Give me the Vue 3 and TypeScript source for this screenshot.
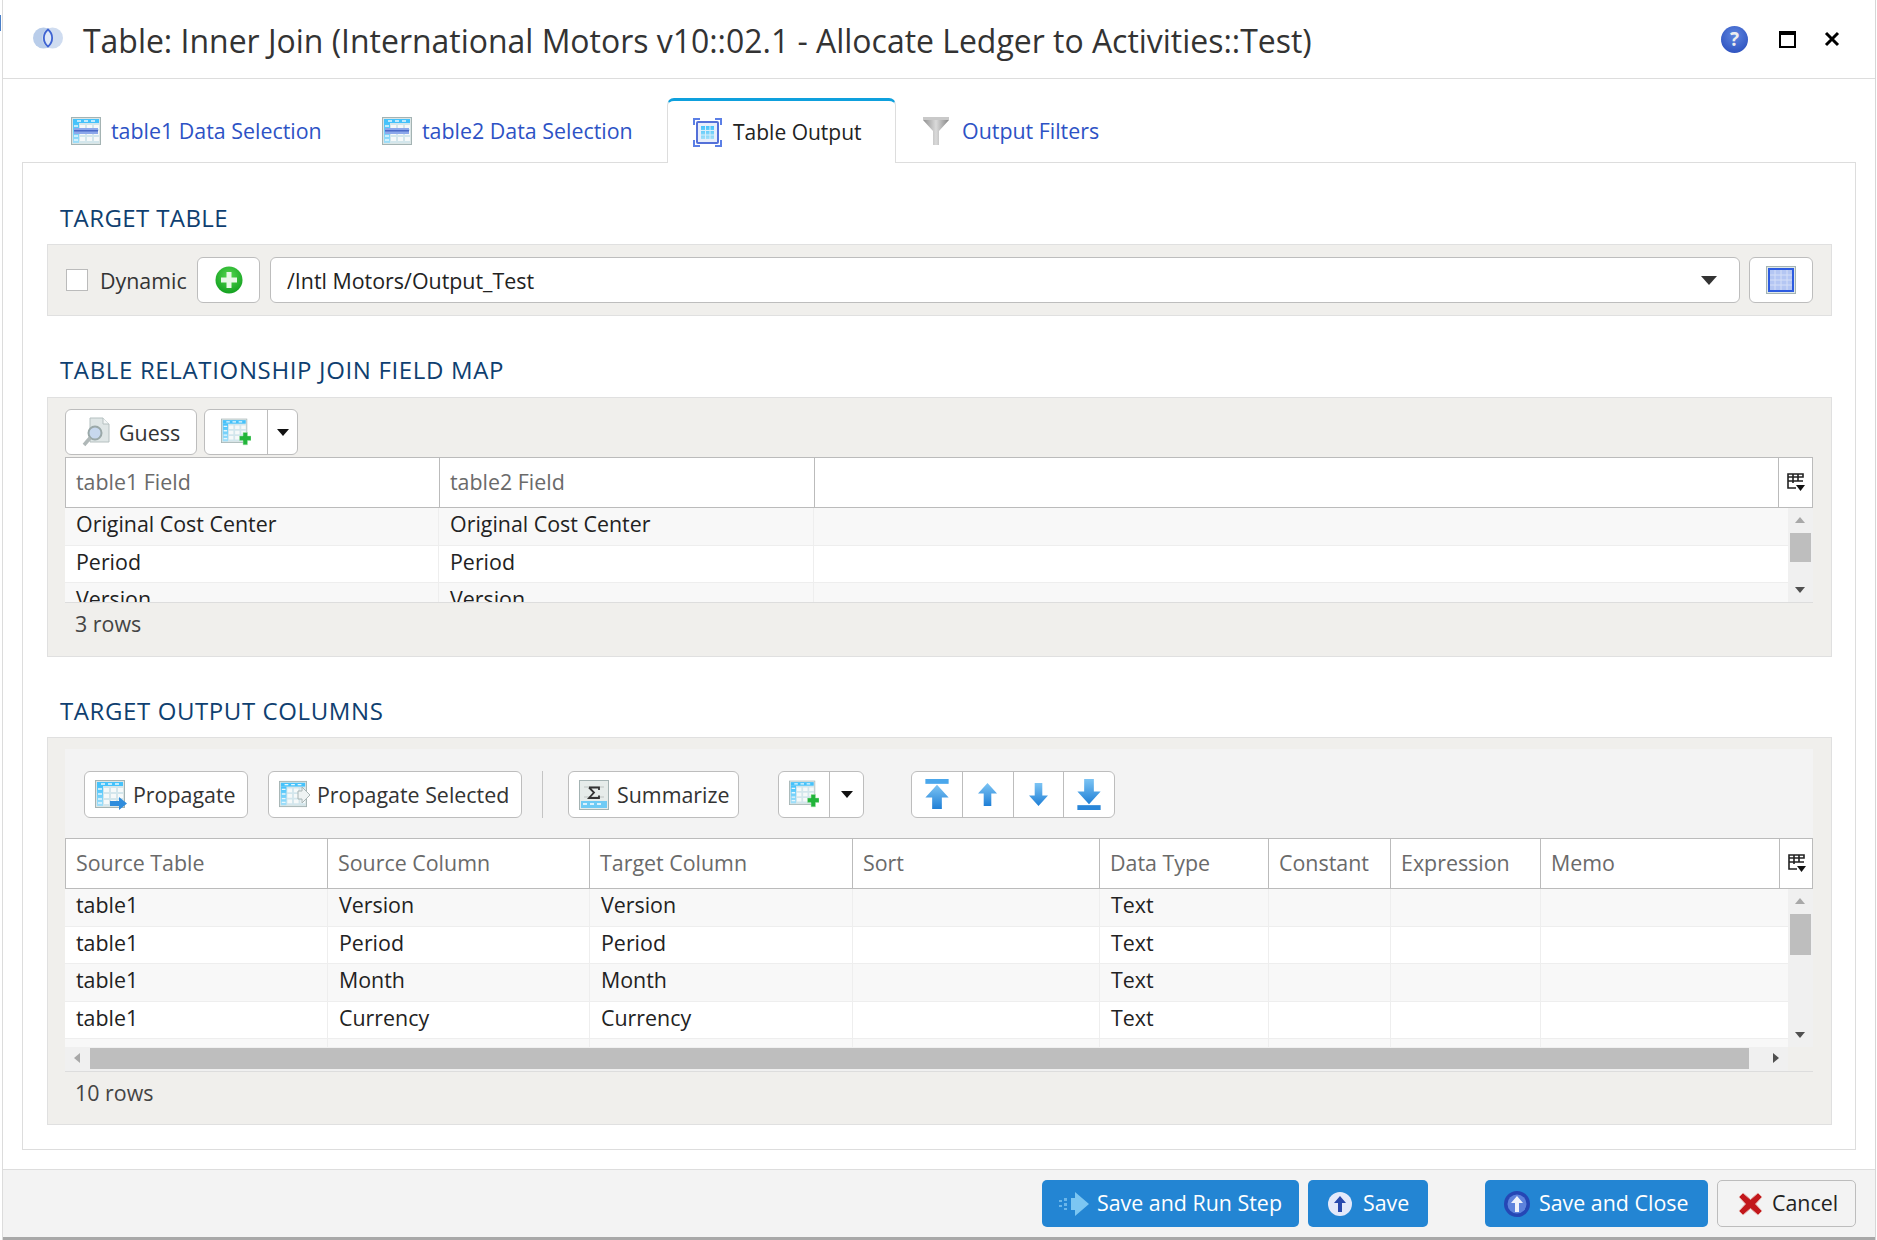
<template>
  <div class="page">
    <span class="edge-mark"></span>
    <div class="dialog">
      <svg class="sprite" width="0" height="0">
        <defs>
          <linearGradient id="cyan" x1="0" y1="0" x2="0" y2="1">
            <stop offset="0" stop-color="#45c2fb" />
            <stop offset="1" stop-color="#a2dff9" />
          </linearGradient>
          <linearGradient id="arrow" x1="0" y1="0" x2="0" y2="1">
            <stop offset="0" stop-color="#7cc4f4" />
            <stop offset="1" stop-color="#1f7fd6" />
          </linearGradient>
          <radialGradient id="green" cx="0.5" cy="0.35" r="0.7">
            <stop offset="0" stop-color="#55d850" />
            <stop offset="1" stop-color="#0e9c1c" />
          </radialGradient>
          <linearGradient id="steel" x1="0" y1="0" x2="1" y2="0">
            <stop offset="0" stop-color="#8f8f8f" />
            <stop offset="0.5" stop-color="#dadada" />
            <stop offset="1" stop-color="#858585" />
          </linearGradient>
          <symbol id="grid" viewBox="0 0 30 28">
            <rect x="0.5" y="0.5" width="29" height="27" fill="#dbe5e5" stroke="#a4b3b3" />
            <rect x="2" y="2" width="26" height="24" fill="#d3e6ec" />
            <rect x="2" y="2" width="26" height="4" fill="#45c2fb" />
            <rect x="2" y="6" width="6" height="20" fill="url(#cyan)" />
            <path d="M9 8h5v4H9zM16 8h5v4h-5zM23 8h5v4h-5zM9 14h5v4H9zM16 14h5v4h-5zM23 14h5v4h-5zM9 20h5v4H9zM16 20h5v4h-5zM23 20h5v4h-5z" fill="#f6f9f9" />
            <path d="M3 9h4M3 14h4M3 19h4M3 23h4M6 4h4M13 4h4M20 4h4" stroke="#e6f7fe" stroke-width="1.5" />
          </symbol>
          <symbol id="grid-band" viewBox="0 0 30 28">
            <use href="#grid" width="30" height="28" />
            <rect x="3" y="11" width="24" height="6" fill="#8da8ea" />
            <rect x="3" y="13" width="24" height="1.5" fill="#4a69c8" />
          </symbol>
          <symbol id="grid-plus" viewBox="0 0 34 32">
            <use href="#grid" width="30" height="28" />
            <path d="M21 20h4v-4h5v4h4v5h-4v5h-5v-5h-4z" fill="#22b53a" stroke="#a7e6ae" stroke-width="0.5" />
          </symbol>
          <symbol id="grid-arrow" viewBox="0 0 32 30">
            <use href="#grid" width="30" height="28" />
            <path d="M15 21h9v-4l8 6.500-8 6.500v-4h-9z" fill="#2f8cdc" />
          </symbol>
          <symbol id="grid-arrow-pale" viewBox="0 0 32 30">
            <use href="#grid" width="28" height="28" />
            <path d="M19 11h4V7l8 8-8 8v-4h-4z" fill="#eef3f3" stroke="#a9b5b5" />
          </symbol>
          <symbol id="sum" viewBox="0 0 30 30">
            <rect x="0.500" y="0.500" width="29" height="29" fill="#e6ecea" stroke="#a4b3b3" />
            <rect x="2" y="21" width="26" height="7" fill="#6fcbf5" />
            <path d="M4 24h4M11 24h4M18 24h4" stroke="#fff" stroke-width="1.500" />
            <path d="M5 7h20M5 17h20" stroke="#d2d8d6" stroke-width="2" />
            <path d="M10 7.500h10v2.500M10 7.500l5 5-5 5.500h10v-2.500" fill="none" stroke="#333" stroke-width="1.800" />
          </symbol>
          <symbol id="top" viewBox="0 0 26 32">
            <rect x="1" y="0" width="24" height="5" fill="#4aa7ec" />
            <path d="M13 6 25 19h-7v12H8V19H1z" fill="url(#arrow)" />
          </symbol>
          <symbol id="up" viewBox="0 0 20 24">
            <path d="M10 0 20 11h-6v13H6V11H0z" fill="url(#arrow)" />
          </symbol>
          <symbol id="down" viewBox="0 0 20 24">
            <path d="M10 24 0 13h6V0h8v13h6z" fill="url(#arrow)" />
          </symbol>
          <symbol id="bottom" viewBox="0 0 26 32">
            <path d="M13 26 1 13h7V0h10v13h7z" fill="url(#arrow)" />
            <rect x="1" y="27" width="24" height="5" fill="#2a86d8" />
          </symbol>
          <symbol id="columns" viewBox="0 0 18 20">
            <path d="M1 2h15v3H1zM1 5v11h8M6 2v9M11 2v7M1 9h15" fill="none" stroke="#222" stroke-width="1.600" />
            <path d="M9 13h9l-4.500 6z" fill="#111" />
          </symbol>
        </defs>
      </svg>

      <header class="title-bar">
        <svg class="venn" width="30" height="22" viewBox="0 0 30 22">
          <circle cx="10.500" cy="11" r="10.500" fill="#b9cdea" />
          <circle cx="19.500" cy="11" r="10.500" fill="#cfdcf0" />
          <path d="M15 2.500c-5.500 4.500-5.500 12.500 0 17 5.500-4.500 5.500-12.500 0-17z" fill="#dfe8f7" stroke="#3e63d2" stroke-width="1.800" />
        </svg>
        <h1 class="title">Table: Inner Join (International Motors v10::02.1 - Allocate Ledger to Activities::Test)</h1>
        <span class="help">?</span>
        <span class="maximize"></span>
        <svg class="close" width="16" height="16" viewBox="0 0 16 16">
          <path d="M2 2l12 12M14 2 2 14" stroke="#000" stroke-width="3" />
        </svg>
      </header>

      <nav class="tabs">
        <a class="tab tab-one"><svg class="tab-icon" width="30" height="28"><use href="#grid-band" /></svg>table1 Data Selection</a>
        <a class="tab tab-two"><svg class="tab-icon" width="30" height="28"><use href="#grid-band" /></svg>table2 Data Selection</a>
        <a class="tab tab-active">
          <svg class="tab-icon" width="29" height="29" viewBox="0 0 29 29">
            <path d="M1 7V1h6M22 1h6v6M28 22v6h-6M7 28H1v-6" fill="none" stroke="#5b7fe6" stroke-width="2" />
            <rect x="4" y="4" width="21" height="21" rx="1" fill="#e8eefb" stroke="#5470d8" stroke-width="2" />
            <rect x="8" y="8" width="13" height="13" fill="url(#cyan)" />
            <path d="M12.500 8v13M17 8v13M8 12.500h13M8 17h13" stroke="#d9eefa" />
          </svg>
          Table Output
        </a>
        <a class="tab tab-filters">
          <svg class="tab-icon" width="26" height="29" viewBox="0 0 26 29">
            <path d="M0 1h26v3L16 15v14h-6V15L0 4z" fill="url(#steel)" />
            <path d="M0 1h26v3H0z" fill="#c9c9c9" />
          </svg>
          Output Filters
        </a>
      </nav>

      <main class="content">
        <h2 class="section-label">TARGET TABLE</h2>
        <section class="panel target-panel">
          <span class="checkbox"></span>
          <span class="dynamic">Dynamic</span>
          <button class="btn add-btn">
            <svg width="28" height="28" viewBox="0 0 28 28">
              <circle cx="14" cy="14" r="13.500" fill="url(#green)" />
              <path d="M11.500 6h5v5.500H22v5h-5.500V22h-5v-5.500H6v-5h5.500z" fill="#e9f8e8" />
            </svg>
          </button>
          <div class="combo">
            <span>/Intl Motors/Output_Test</span>
            <i class="caret-lg"></i>
          </div>
          <button class="btn table-btn">
            <svg width="30" height="28" viewBox="0 0 30 28">
              <rect x="0.500" y="0.500" width="29" height="27" fill="#dfe8e8" stroke="#a4b3b3" />
              <rect x="3" y="3" width="24" height="22" fill="#b4c6f3" stroke="#2d5be0" stroke-width="2" />
              <path d="M9 4v20M15 4v20M21 4v20M4 9h22M4 14h22M4 19h22" stroke="#d5dff8" />
            </svg>
          </button>
        </section>

        <h2 class="section-label label-join">TABLE RELATIONSHIP JOIN FIELD MAP</h2>
        <section class="panel grid-panel">
          <div class="toolbar-plain">
            <button class="btn guess-btn">
              <svg width="28" height="30" viewBox="0 0 28 30">
                <path d="M8 1h13l6 6v18H8z" fill="#dfe6e6" stroke="#b5c0c0" />
                <path d="M21 1v6h6" fill="#f4f7f7" stroke="#b5c0c0" />
                <circle cx="13" cy="16" r="6.500" fill="#c7d8ee" stroke="#9aa8a8" stroke-width="2" />
                <path d="M8 21 2 28" stroke="#b0b8b8" stroke-width="3.500" />
              </svg>
              Guess
            </button>
            <div class="split">
              <span class="split-main"><svg width="30" height="29" viewBox="0 0 34 32"><use href="#grid-plus" /></svg></span>
              <span class="split-drop"><i class="caret"></i></span>
            </div>
          </div>
          <div class="data-grid">
            <div class="grid-head head-one">
              <span v-for="c in joinCols" :key="c">{{ c }}</span>
              <span></span>
              <span class="col-picker"><svg width="18" height="20"><use href="#columns" /></svg></span>
            </div>
            <div class="grid-body body-one">
              <div class="rows">
                <div v-for="r in joinRows" :key="r" class="row row-one">
                  <span>{{ r }}</span><span>{{ r }}</span><span></span>
                </div>
              </div>
              <div class="vscroll">
                <i class="arrow-up"></i>
                <b class="thumb thumb-one"></b>
                <i class="arrow-down"></i>
              </div>
            </div>
          </div>
          <div class="row-count">3 rows</div>
        </section>

        <h2 class="section-label label-output">TARGET OUTPUT COLUMNS</h2>
        <section class="panel grid-panel">
          <div class="toolbar">
            <button class="btn prop-btn"><svg width="32" height="30"><use href="#grid-arrow" /></svg>Propagate</button>
            <button class="btn sel-btn"><svg width="32" height="30"><use href="#grid-arrow-pale" /></svg>Propagate Selected</button>
            <span class="sep"></span>
            <button class="btn sum-btn"><svg width="30" height="30"><use href="#sum" /></svg>Summarize</button>
            <div class="split split-two">
              <span class="split-main"><svg width="30" height="29" viewBox="0 0 34 32"><use href="#grid-plus" /></svg></span>
              <span class="split-drop"><i class="caret"></i></span>
            </div>
            <div class="move-group">
              <span><svg width="26" height="31"><use href="#top" /></svg></span>
              <span><svg width="19" height="23"><use href="#up" /></svg></span>
              <span><svg width="19" height="23"><use href="#down" /></svg></span>
              <span><svg width="26" height="31"><use href="#bottom" /></svg></span>
            </div>
          </div>
          <div class="data-grid">
            <div class="grid-head head-two">
              <span v-for="c in outputCols" :key="c">{{ c }}</span>
              <span class="col-picker"><svg width="18" height="20"><use href="#columns" /></svg></span>
            </div>
            <div class="grid-body body-two">
              <div class="rows">
                <div v-for="(r, i) in outputRows" :key="i" class="row row-two">
                  <span>{{ r[0] }}</span><span>{{ r[1] }}</span><span>{{ r[1] }}</span><span></span>
                  <span>Text</span><span></span><span></span><span></span>
                </div>
              </div>
              <div class="vscroll">
                <i class="arrow-up"></i>
                <b class="thumb thumb-two"></b>
                <i class="arrow-down"></i>
              </div>
            </div>
            <div class="hscroll">
              <i class="arrow-left"></i>
              <b class="hthumb"></b>
              <i class="arrow-right"></i>
              <span class="corner"></span>
            </div>
          </div>
          <div class="row-count count-two">10 rows</div>
        </section>
      </main>

      <footer class="footer">
        <button class="action run-btn">
          <svg width="30" height="24" viewBox="0 0 30 24">
            <path d="M16 0l14 12-14 12v-6H12V6h4z" fill="#7cc6f2" />
            <path d="M0 8h3v2H0zM5 6h3v3H5zM5 11h3v3H5zM0 13h3v2H0zM5 16h3v2H5z" fill="#6ab6ea" />
          </svg>
          <span>Save and Run Step</span>
        </button>
        <button class="action save-btn">
          <svg width="24" height="24" viewBox="0 0 24 24">
            <circle cx="12" cy="12" r="12" fill="#e4e9fa" />
            <path d="M12 4l6 7h-4v9h-4v-9H6z" fill="#2a49ad" />
          </svg>
          <span>Save</span>
        </button>
        <button class="action close-btn">
          <svg width="26" height="26" viewBox="0 0 26 26">
            <circle cx="13" cy="13" r="13" fill="#2547b5" />
            <circle cx="13" cy="13" r="9.500" fill="#5d83dc" />
            <path d="M13 5l6 7h-4v9h-4v-9H7z" fill="#eef2fb" />
          </svg>
          <span>Save and Close</span>
        </button>
        <button class="action cancel-btn">
          <svg width="25" height="24" viewBox="0 0 25 24">
            <path d="M1 5l4-4 7.500 6.500L20 1l4 4-6.500 7 6.500 7-4 4-7.500-6.500L5 23l-4-4 6.500-7z" fill="#c2171b" stroke="#e3a9a5" />
          </svg>
          <span>Cancel</span>
        </button>
      </footer>
    </div>
  </div>
</template>

<script setup lang="ts">
const joinCols = ['table1 Field', 'table2 Field']
const joinRows = ['Original Cost Center', 'Period', 'Version']

const outputCols = ['Source Table', 'Source Column', 'Target Column', 'Sort', 'Data Type', 'Constant', 'Expression', 'Memo']
const outputRows = [
  ['table1', 'Version'],
  ['table1', 'Period'],
  ['table1', 'Month'],
  ['table1', 'Currency'],
  ['table1', 'Original Cost Center'],
]
</script>

<style>
html, body {
  background: #fff;
}
</style>

<style scoped>
.page {
  position: relative;
  height: 1240px;
  overflow: hidden;
}

.edge-mark {
  position: absolute;
  left: 0;
  top: 15px;
  width: 1px;
  height: 16px;
  background: #4a7fc8;
}

.dialog {
  width: 1874px;
  height: 1240px;
  margin-left: 2px;
  border-left: 1px solid #dcdcdc;
  border-right: 1px solid #d6d6d6;
  box-sizing: border-box;
  display: flex;
  flex-direction: column;
  background: #fff;
  color: #222;
  font-family: "Open Sans", "Noto Sans", sans-serif;
  font-size: 21.400px;
  overflow: hidden;
}

.sprite {
  display: block;
}

.title-bar {
  height: 79px;
  box-sizing: border-box;
  border-bottom: 1px solid #ddd;
  display: flex;
  align-items: center;
  padding-left: 30px;
  flex: none;
}

.venn {
  margin-top: -3px;
}

.title {
  margin: 3px 0 0 20px;
  font-size: 31.950px;
  font-weight: 400;
  color: #333;
  flex: 1;
  white-space: nowrap;
  line-height: 1;
}

.help {
  width: 27px;
  height: 27px;
  border-radius: 50%;
  background: radial-gradient(circle at 50% 35%, #5f86e0, #2347b8);
  color: #eee;
  font-weight: 700;
  font-size: 19px;
  line-height: 27px;
  text-align: center;
}

.maximize {
  width: 17px;
  height: 17px;
  box-sizing: border-box;
  border: 2px solid #000;
  border-top-width: 4px;
  margin-left: 31px;
}

.close {
  margin-left: 28px;
  margin-right: 35px;
}

.tabs {
  height: 83px;
  flex: none;
  display: flex;
  align-items: flex-start;
  position: relative;
  z-index: 1;
}

.tab {
  display: flex;
  align-items: center;
  color: #2d52c5;
  white-space: nowrap;
  height: 83px;
  box-sizing: border-box;
  padding-top: 20px;
}

.tab-icon {
  margin-right: 10px;
  flex: none;
}

.tab-one {
  width: 260px;
  margin-left: 68px;
}

.tab-two {
  width: 260px;
  margin-left: 51px;
}

.tab-active {
  width: 229px;
  height: 65px;
  margin-left: 25px;
  margin-top: 19px;
  padding-top: 0;
  padding-left: 25px;
  background: #fff;
  color: #222;
  font-size: 21px;
  border: 1px solid #ddd;
  border-top: 3px solid #0ea0dd;
  border-bottom: 0;
  border-radius: 7px 7px 0 0;
}

.tab-active .tab-icon {
  margin-right: 11px;
}

.tab-filters {
  margin-left: 27px;
}

.tab-filters .tab-icon {
  margin-right: 13px;
}

.content {
  margin: 0 19px;
  height: 988px;
  flex: none;
  box-sizing: border-box;
  border: 1px solid #ddd;
  padding: 40px 23px 0 24px;
}

.section-label {
  margin: 0 0 11px 13px;
  height: 30px;
  line-height: 30px;
  font-size: 24px;
  font-weight: 400;
  color: #0f3f70;
  letter-spacing: 0.4px;
}

.label-join {
  margin-top: 39px;
  margin-bottom: 12px;
  letter-spacing: 0.65px;
}

.label-output {
  margin-top: 39px;
  letter-spacing: 0.6px;
}

.panel {
  box-sizing: border-box;
  background: #f0efec;
  border: 1px solid #e0e0e0;
}

.target-panel {
  height: 72px;
  display: flex;
  align-items: center;
  padding: 0 18px;
}

.checkbox {
  width: 22px;
  height: 22px;
  background: #fff;
  border: 1px solid #bbb;
  box-sizing: border-box;
  flex: none;
}

.dynamic {
  margin-left: 12px;
  width: 85px;
  color: #333;
  white-space: nowrap;
}

.btn {
  box-sizing: border-box;
  height: 46px;
  background: #fff;
  border: 1px solid #bdbdbd;
  border-radius: 6px;
  display: flex;
  align-items: center;
  font: inherit;
  color: #333;
  padding: 0;
  flex: none;
  white-space: nowrap;
}

.add-btn {
  width: 63px;
  margin-left: 12px;
  justify-content: center;
}

.combo {
  flex: 1;
  margin-left: 10px;
  height: 46px;
  box-sizing: border-box;
  background: #fff;
  border: 1px solid #bdbdbd;
  border-radius: 6px;
  display: flex;
  align-items: center;
  justify-content: space-between;
  padding: 0 22px 0 16px;
}

.caret-lg {
  width: 0;
  height: 0;
  border-left: 8px solid transparent;
  border-right: 8px solid transparent;
  border-top: 9px solid #333;
}

.table-btn {
  width: 64px;
  margin-left: 9px;
  justify-content: center;
}

.grid-panel {
  padding: 11px 18px 0 17px;
}

.toolbar-plain {
  display: flex;
  height: 46px;
  gap: 7px;
  margin-bottom: 2px;
}

.guess-btn {
  width: 132px;
  padding-left: 16px;
  gap: 9px;
}

.split {
  width: 94px;
  height: 46px;
  box-sizing: border-box;
  background: #fff;
  border: 1px solid #bdbdbd;
  border-radius: 6px;
  display: flex;
}

.split-main {
  width: 62px;
  display: flex;
  align-items: center;
  justify-content: center;
  border-right: 1px solid #bdbdbd;
}

.split-drop {
  flex: 1;
  display: flex;
  align-items: center;
  justify-content: center;
}

.caret {
  width: 0;
  height: 0;
  border-left: 6px solid transparent;
  border-right: 6px solid transparent;
  border-top: 7px solid #111;
}

.data-grid {
  background: #fff;
}

.grid-head {
  height: 51px;
  box-sizing: border-box;
  display: grid;
  border: 1px solid #bbb;
  background: #fff;
  color: #6a6a6a;
  align-items: center;
}

.grid-head > span {
  height: 100%;
  display: flex;
  align-items: center;
  padding: 0 0 2px 10px;
  box-sizing: border-box;
  border-right: 1px solid #bbb;
  overflow: hidden;
  white-space: nowrap;
}

.grid-head > span:last-child {
  border-right: 0;
}

.grid-head > .col-picker {
  padding-left: 8px;
}

.head-one {
  grid-template-columns: 374px 375px 1fr 33px;
}

.head-two {
  grid-template-columns: 262px 262px 263px 247px 169px 122px 150px 239px 1fr;
}

.grid-body {
  display: flex;
  overflow: hidden;
}

.body-one {
  height: 94px;
  border-bottom: 1px solid #ddd;
}

.body-two {
  height: 158px;
}

.rows {
  flex: 1;
  overflow: hidden;
}

.row {
  height: 37.500px;
  box-sizing: border-box;
  display: grid;
  border-bottom: 1px solid #eee;
  background: #fff;
  align-items: center;
}

.row:nth-child(odd) {
  background: #f8f8f8;
}

.row > span {
  height: 100%;
  display: flex;
  align-items: center;
  padding: 0 0 5px 11px;
  box-sizing: border-box;
  border-right: 1px solid #eee;
  white-space: nowrap;
  overflow: hidden;
}

.row > span:last-child {
  border-right: 0;
}

.row-one {
  grid-template-columns: 374px 375px 1fr;
}

.row-two {
  grid-template-columns: 263px 262px 263px 247px 169px 122px 150px 1fr;
}

.vscroll {
  width: 25px;
  flex: none;
  background: #f0f0f0;
  position: relative;
}

.arrow-up,
.arrow-down {
  position: absolute;
  left: 7px;
  width: 0;
  height: 0;
  border-left: 5.500px solid transparent;
  border-right: 5.500px solid transparent;
}

.arrow-up {
  top: 9px;
  border-bottom: 6px solid #a8a8a8;
}

.arrow-down {
  bottom: 9px;
  border-top: 6px solid #505050;
}

.thumb {
  position: absolute;
  left: 2px;
  width: 21px;
  background: #bebebe;
}

.thumb-one {
  top: 25px;
  height: 29px;
}

.thumb-two {
  top: 25px;
  height: 41px;
}

.hscroll {
  height: 25px;
  box-sizing: border-box;
  border-bottom: 1px solid #ddd;
  background: #f0f0f0;
  position: relative;
}

.arrow-left,
.arrow-right {
  position: absolute;
  top: 6px;
  width: 0;
  height: 0;
  border-top: 5.500px solid transparent;
  border-bottom: 5.500px solid transparent;
}

.arrow-left {
  left: 9px;
  border-right: 6px solid #a8a8a8;
}

.arrow-right {
  left: 1708px;
  border-left: 6px solid #505050;
}

.hthumb {
  position: absolute;
  left: 25px;
  top: 1px;
  width: 1659px;
  height: 21px;
  background: #bebebe;
}

.corner {
  position: absolute;
  right: 0;
  top: 0;
  width: 25px;
  height: 24px;
  background: #f0efec;
}

.row-count {
  height: 42px;
  line-height: 42px;
  padding-left: 10px;
  color: #444;
  margin-bottom: 11px;
}

.count-two {
  margin-bottom: 10px;
}

.toolbar {
  height: 89px;
  background: #f3f3f3;
  display: flex;
  align-items: center;
  padding: 2px 0 0 19px;
  box-sizing: border-box;
}

.toolbar .btn {
  height: 47px;
}

.prop-btn {
  width: 164px;
  padding-left: 10px;
  gap: 6px;
}

.sel-btn {
  width: 254px;
  margin-left: 20px;
  padding-left: 10px;
  gap: 6px;
}

.sep {
  width: 1px;
  height: 47px;
  background: #c4c4c4;
  margin-left: 20px;
}

.sum-btn {
  width: 171px;
  margin-left: 25px;
  padding-left: 10px;
  gap: 8px;
}

.split-two {
  width: 86px;
  height: 47px;
  margin-left: 39px;
}

.split-two .split-main {
  width: 50px;
}

.move-group {
  margin-left: 47px;
  width: 204px;
  height: 47px;
  box-sizing: border-box;
  background: #fff;
  border: 1px solid #bdbdbd;
  border-radius: 6px;
  display: flex;
}

.move-group span {
  flex: 1;
  display: flex;
  align-items: center;
  justify-content: center;
  border-right: 1px solid #bdbdbd;
}

.move-group span:last-child {
  border-right: 0;
}

.footer {
  margin-top: 19px;
  height: 71px;
  flex: none;
  box-sizing: border-box;
  background: #f3f3f3;
  border-top: 1px solid #ddd;
  border-bottom: 3px solid #a8a8a8;
  display: flex;
  align-items: flex-start;
  justify-content: flex-end;
  padding: 10px 19px 0 0;
}

.action {
  height: 47px;
  box-sizing: border-box;
  border: 0;
  border-radius: 5px;
  background: #2385d3;
  color: #fff;
  font: inherit;
  display: flex;
  align-items: center;
  padding: 0;
  white-space: nowrap;
}

.action span {
  margin-bottom: 3px;
}

.run-btn {
  width: 257px;
  padding-left: 17px;
  gap: 8px;
}

.save-btn {
  width: 120px;
  margin-left: 9px;
  padding-left: 20px;
  gap: 11px;
}

.close-btn {
  width: 223px;
  margin-left: 57px;
  padding-left: 19px;
  gap: 9px;
}

.cancel-btn {
  width: 139px;
  margin-left: 9px;
  padding-left: 20px;
  gap: 9px;
  background: #f3f3f3;
  border: 1px solid #bdbdbd;
  color: #222;
}
</style>
